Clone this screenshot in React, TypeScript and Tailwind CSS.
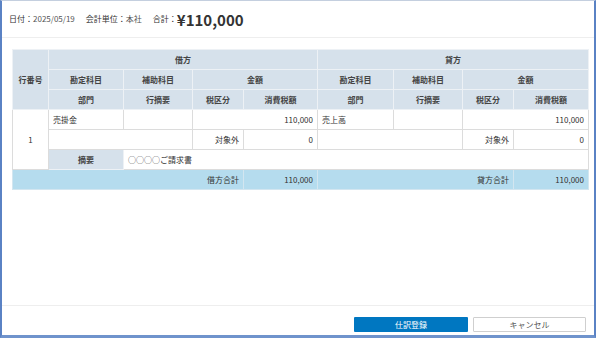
import React from "react";

const FONT = { fontFamily: '"Noto Sans CJK JP", "Noto Sans", sans-serif' };

const th = "border border-[#edf1f5] bg-[#d6e1eb] text-[#444] font-bold text-center h-[20px] p-0";
const td = "border border-[#dcdcdc] bg-white text-[#333] h-[20px] px-[4px] py-0";
const tot = "border border-[#d3e6f0] bg-[#b5dcee] text-[#333] h-[20px] px-[4px] py-0 text-right";

export default function App() {
  return (
    <div
      className="w-[596px] h-[338px] flex flex-col bg-white border-t border-t-[#c4cfdf] border-l-2 border-r-2 border-b-[3px] border-l-[#5a82c4] border-r-[#5a82c4] border-b-[#6f93cc] text-[#333]"
      style={FONT}
    >
      {/* header */}
      <div className="h-[37px] shrink-0 flex items-center pl-[7px] border-b border-[#eeeeee] text-[8px]">
        <span className="text-[#333]">日付：</span>
        <span className="text-[#555]">2025/05/19</span>
        <span className="ml-[11px] text-[#333]">会計単位：</span>
        <span className="text-[#555]">本社</span>
        <span className="ml-[11px] text-[#333]">合計：</span>
        <span className="text-[15px] font-bold text-[#333] leading-none">¥110,000</span>
      </div>

      {/* body */}
      <div className="flex-1 pt-[11px] pl-[10px] pr-[6px]">
        <table className="w-[576px] table-fixed border-collapse text-[8px] leading-none border border-[#d0d7de]">
          <colgroup>
            <col className="w-[36px]" />
            <col className="w-[75px]" />
            <col className="w-[69px]" />
            <col className="w-[51px]" />
            <col className="w-[74px]" />
            <col className="w-[76px]" />
            <col className="w-[69px]" />
            <col className="w-[51px]" />
            <col className="w-[75px]" />
          </colgroup>
          <thead>
            <tr>
              <th rowSpan={3} className={th}>行番号</th>
              <th colSpan={4} className={th}>借方</th>
              <th colSpan={4} className={th}>貸方</th>
            </tr>
            <tr>
              <th className={th}>勘定科目</th>
              <th className={th}>補助科目</th>
              <th colSpan={2} className={th}>金額</th>
              <th className={th}>勘定科目</th>
              <th className={th}>補助科目</th>
              <th colSpan={2} className={th}>金額</th>
            </tr>
            <tr>
              <th className={th}>部門</th>
              <th className={th}>行摘要</th>
              <th className={th}>税区分</th>
              <th className={th}>消費税額</th>
              <th className={th}>部門</th>
              <th className={th}>行摘要</th>
              <th className={th}>税区分</th>
              <th className={th}>消費税額</th>
            </tr>
          </thead>
          <tbody>
            <tr>
              <td rowSpan={3} className={`${td} text-center`}>1</td>
              <td className={td}>売掛金</td>
              <td className={td}></td>
              <td colSpan={2} className={`${td} text-right`}>110,000</td>
              <td className={td}>売上高</td>
              <td className={td}></td>
              <td colSpan={2} className={`${td} text-right`}>110,000</td>
            </tr>
            <tr>
              <td colSpan={2} className={td}></td>
              <td className={`${td} text-right`}>対象外</td>
              <td className={`${td} text-right`}>0</td>
              <td colSpan={2} className={td}></td>
              <td className={`${td} text-right`}>対象外</td>
              <td className={`${td} text-right`}>0</td>
            </tr>
            <tr>
              <th className={th}>摘要</th>
              <td colSpan={7} className={td}>
                <span
                  className="text-[#444] [font-variant-emoji:text]"
                  style={{ fontFamily: '"Noto Sans CJK JP", "DejaVu Sans", sans-serif' }}
                >
                  ○○○○
                </span>
                ご請求書
              </td>
            </tr>
            <tr>
              <td colSpan={4} className={tot}>借方合計</td>
              <td className={tot}>110,000</td>
              <td colSpan={3} className={tot}>貸方合計</td>
              <td className={tot}>110,000</td>
            </tr>
          </tbody>
        </table>
      </div>

      {/* footer */}
      <div className="h-[30px] shrink-0 border-t border-[#eeeeee] flex items-start justify-end gap-[5px] pt-[11px] pr-[8px]">
        <button className="w-[114px] h-[15px] bg-[#0077c1] text-white text-[8px] leading-none rounded-[1px]">
          仕訳登録
        </button>
        <button className="w-[113px] h-[15px] bg-white border border-[#cfcfcf] text-[#555] text-[8px] leading-none rounded-[1px]">
          キャンセル
        </button>
      </div>
    </div>
  );
}
